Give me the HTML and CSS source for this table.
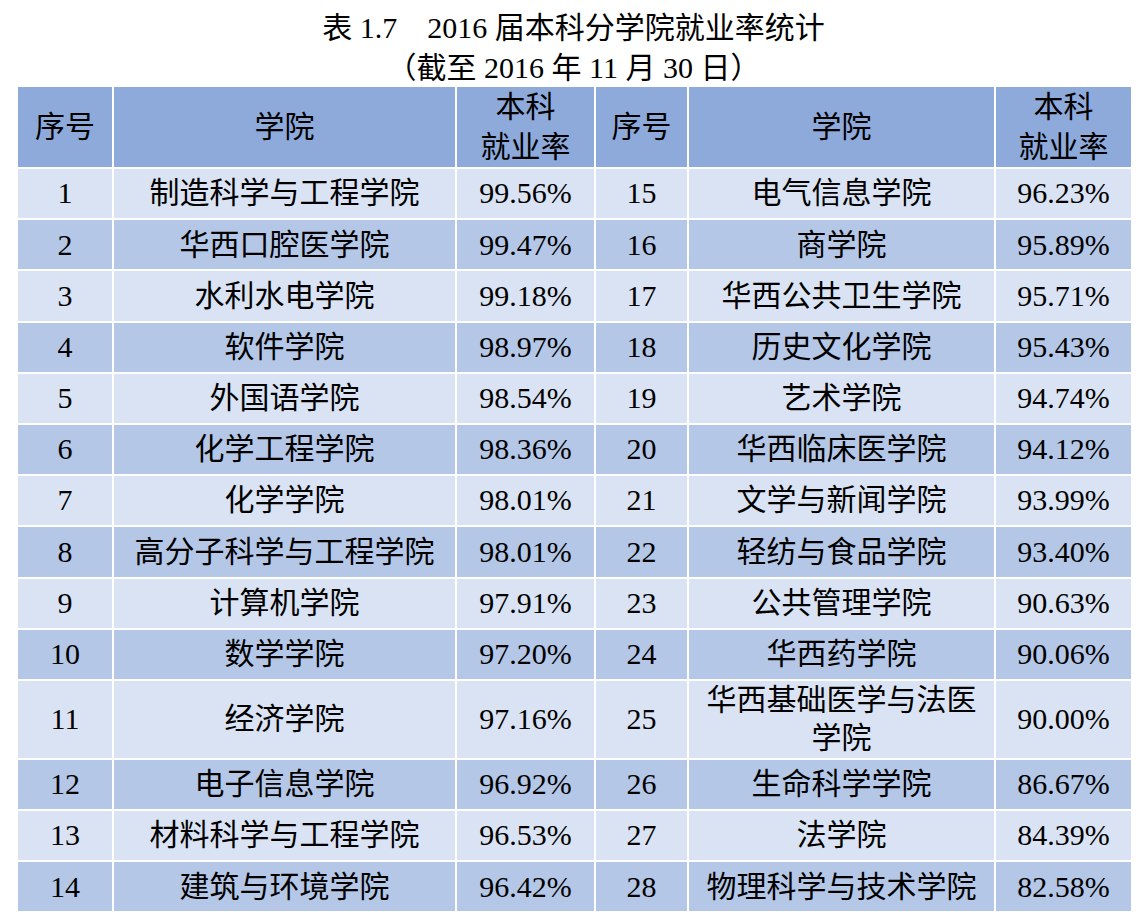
FILE: index.html
```html
<!DOCTYPE html>
<html lang="zh-CN">
<head>
<meta charset="utf-8">
<title>2016 届本科分学院就业率统计</title>
<link rel="stylesheet" href="styles.css">
</head>
<body>
<div class="page">
  <div class="caption">
    <div class="caption-line">表 1.7　2016 届本科分学院就业率统计</div>
    <div class="caption-line">（截至 2016 年 11 月 30 日）</div>
  </div>
  <table class="stats">
    <colgroup>
      <col class="c-no"><col class="c-name"><col class="c-rate">
      <col class="c-no2"><col class="c-name2"><col class="c-rate2">
    </colgroup>
    <thead>
      <tr>
        <th>序号</th><th>学院</th><th>本科<br>就业率</th>
        <th>序号</th><th>学院</th><th>本科<br>就业率</th>
      </tr>
    </thead>
    <tbody>
      <tr><td>1</td><td>制造科学与工程学院</td><td>99.56%</td><td>15</td><td>电气信息学院</td><td>96.23%</td></tr>
      <tr><td>2</td><td>华西口腔医学院</td><td>99.47%</td><td>16</td><td>商学院</td><td>95.89%</td></tr>
      <tr><td>3</td><td>水利水电学院</td><td>99.18%</td><td>17</td><td>华西公共卫生学院</td><td>95.71%</td></tr>
      <tr><td>4</td><td>软件学院</td><td>98.97%</td><td>18</td><td>历史文化学院</td><td>95.43%</td></tr>
      <tr><td>5</td><td>外国语学院</td><td>98.54%</td><td>19</td><td>艺术学院</td><td>94.74%</td></tr>
      <tr><td>6</td><td>化学工程学院</td><td>98.36%</td><td>20</td><td>华西临床医学院</td><td>94.12%</td></tr>
      <tr><td>7</td><td>化学学院</td><td>98.01%</td><td>21</td><td>文学与新闻学院</td><td>93.99%</td></tr>
      <tr><td>8</td><td>高分子科学与工程学院</td><td>98.01%</td><td>22</td><td>轻纺与食品学院</td><td>93.40%</td></tr>
      <tr><td>9</td><td>计算机学院</td><td>97.91%</td><td>23</td><td>公共管理学院</td><td>90.63%</td></tr>
      <tr><td>10</td><td>数学学院</td><td>97.20%</td><td>24</td><td>华西药学院</td><td>90.06%</td></tr>
      <tr><td>11</td><td>经济学院</td><td>97.16%</td><td>25</td><td>华西基础医学与法医学院</td><td>90.00%</td></tr>
      <tr><td>12</td><td>电子信息学院</td><td>96.92%</td><td>26</td><td>生命科学学院</td><td>86.67%</td></tr>
      <tr><td>13</td><td>材料科学与工程学院</td><td>96.53%</td><td>27</td><td>法学院</td><td>84.39%</td></tr>
      <tr><td>14</td><td>建筑与环境学院</td><td>96.42%</td><td>28</td><td>物理科学与技术学院</td><td>82.58%</td></tr>
    </tbody>
  </table>
</div>
</body>
</html>
```

FILE: styles.css
```css
html, body {
  margin: 0;
  padding: 0;
  background: #ffffff;
}

body {
  font-family: "Liberation Serif", "Noto Sans CJK SC", serif;
  color: #000000;
}

.page {
  width: 1115px;
  padding: 8px 0 0 16px;
}

.caption {
  text-align: center;
  font-size: 30px;
  line-height: 40px;
  margin-bottom: -1px;
}

.stats {
  width: 1115px;
  table-layout: fixed;
  border-collapse: collapse;
  font-size: 30px;
}

.c-no { width: 96px; }
.c-name { width: 343px; }
.c-rate { width: 139px; }
.c-no2 { width: 93px; }
.c-name2 { width: 307px; }
.c-rate2 { width: 137px; }

.stats th,
.stats td {
  border: 2px solid #ffffff;
  text-align: center;
  vertical-align: middle;
  padding: 0 4px;
  font-weight: normal;
}

.stats thead th {
  border-top: 0;
  background: #8eaadb;
  line-height: 40px;
  height: 79px;
}

.stats td {
  line-height: 38.5px;
  height: 49.2px;
}

.stats td:nth-child(5) {
  padding: 0 16px;
}

.stats tbody tr:nth-child(odd) td {
  background: #dae3f3;
}

.stats tbody tr:nth-child(even) td {
  background: #b4c7e7;
}
```
